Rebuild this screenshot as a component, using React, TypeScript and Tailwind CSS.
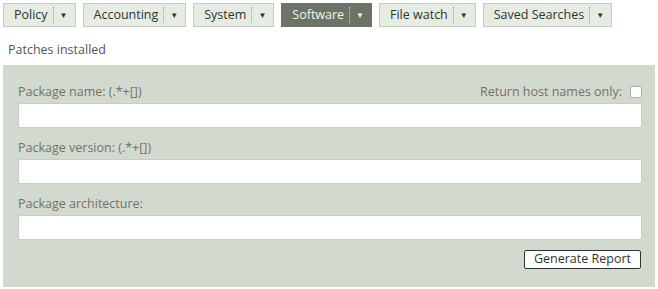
const tabs = ['Policy', 'Accounting', 'System', 'Software', 'File watch', 'Saved Searches'];

function Tab({ label, active }: { label: string; active?: boolean }) {
  return (
    <div
      className={
        'flex items-center h-[24px] border pl-[10px] pr-[7px] text-[12.5px] ' +
        (active ? 'bg-[#6b7466] border-[#6b7466] text-[#f2f4f0]' : 'bg-[#e5ece2] border-[#c6cbc3] text-[#333]')
      }
    >
      <span>{label}</span>
      <span
        className={
          'ml-[5px] h-[16px] border-l border-dotted ' + (active ? 'border-[#c9cec6]' : 'border-[#9aa096]')
        }
      />
      <span className="ml-[6px] text-[8px] leading-none">▼</span>
    </div>
  );
}

function Field({ label }: { label: string }) {
  return (
    <div className="flex flex-col">
      <label className="text-[12.5px] text-[#72726a] leading-[16px] mb-[3px]">{label}</label>
      <div className="h-[25px] bg-white border border-[#c7cdc4] rounded-[2px]" />
    </div>
  );
}

export default function App() {
  return (
    <div className="w-[658px] h-[289px] bg-white pt-[3px] px-[3px]" style={{ fontFamily: '"Open Sans", sans-serif' }}>
      <div className="flex gap-[7px]">
        {tabs.map((t) => (
          <Tab key={t} label={t} active={t === 'Software'} />
        ))}
      </div>
      <div className="mt-[15px] ml-[5px] text-[12.5px] text-[#555] leading-[16px]">Patches installed</div>
      <div className="mt-[7px] w-[652px] h-[222px] bg-[#d2dacf] pl-[15px] pr-[13px] pt-[19px]">
        <div className="flex flex-col gap-[12px]">
          <div className="relative">
            <div className="absolute right-0 top-0 flex items-center gap-[8px] text-[12.5px] text-[#72726a] leading-[16px]">
              <span>Return host names only:</span>
              <span className="w-[12px] h-[12px] bg-white border border-[#aab0a6] rounded-[2px]" />
            </div>
            <Field label="Package name: (.*+[])" />
          </div>
          <Field label="Package version: (.*+[])" />
          <Field label="Package architecture:" />
        </div>
        <div className="flex justify-end mt-[10px] pr-[1px]">
          <button className="h-[19px] w-[117px] bg-white border border-[#333] rounded-[2px] text-[12.5px] text-[#333] leading-none">
            Generate Report
          </button>
        </div>
      </div>
    </div>
  );
}
